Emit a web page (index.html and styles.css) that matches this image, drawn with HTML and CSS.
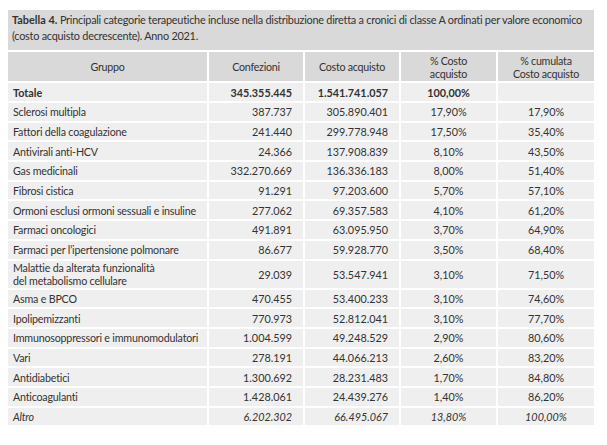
FILE: index.html
```html
<!DOCTYPE html>
<html lang="it">
<head>
<meta charset="utf-8">
<link rel="stylesheet" href="styles.css">
</head>
<body>
<div class="box">
  <p class="caption"><b class="cap-label">Tabella 4.</b> Principali categorie terapeutiche incluse nella distribuzione diretta a cronici di classe A ordinati per valore economico<br>(costo acquisto decrescente). Anno 2021.</p>
  <table class="tbl">
    <colgroup>
      <col class="c1"><col class="c2"><col class="c3"><col class="c4"><col class="c5">
    </colgroup>
    <thead>
      <tr><th>Gruppo</th><th>Confezioni</th><th>Costo acquisto</th><th>% Costo<br>acquisto</th><th>% cumulata<br>Costo acquisto</th></tr>
    </thead>
    <tbody>
      <tr class="tot"><td>Totale</td><td class="num">345.355.445</td><td class="num">1.541.741.057</td><td class="pct">100,00%</td><td class="pct"></td></tr>
      <tr><td>Sclerosi multipla</td><td class="num">387.737</td><td class="num">305.890.401</td><td class="pct">17,90%</td><td class="pct">17,90%</td></tr>
      <tr><td>Fattori della coagulazione</td><td class="num">241.440</td><td class="num">299.778.948</td><td class="pct">17,50%</td><td class="pct">35,40%</td></tr>
      <tr><td>Antivirali anti-HCV</td><td class="num">24.366</td><td class="num">137.908.839</td><td class="pct">8,10%</td><td class="pct">43,50%</td></tr>
      <tr><td>Gas medicinali</td><td class="num">332.270.669</td><td class="num">136.336.183</td><td class="pct">8,00%</td><td class="pct">51,40%</td></tr>
      <tr><td>Fibrosi cistica</td><td class="num">91.291</td><td class="num">97.203.600</td><td class="pct">5,70%</td><td class="pct">57,10%</td></tr>
      <tr><td>Ormoni esclusi ormoni sessuali e insuline</td><td class="num">277.062</td><td class="num">69.357.583</td><td class="pct">4,10%</td><td class="pct">61,20%</td></tr>
      <tr><td>Farmaci oncologici</td><td class="num">491.891</td><td class="num">63.095.950</td><td class="pct">3,70%</td><td class="pct">64,90%</td></tr>
      <tr><td>Farmaci per l’ipertensione polmonare</td><td class="num">86.677</td><td class="num">59.928.770</td><td class="pct">3,50%</td><td class="pct">68,40%</td></tr>
      <tr class="two"><td>Malattie da alterata funzionalità<br>del metabolismo cellulare</td><td class="num">29.039</td><td class="num">53.547.941</td><td class="pct">3,10%</td><td class="pct">71,50%</td></tr>
      <tr><td>Asma e BPCO</td><td class="num">470.455</td><td class="num">53.400.233</td><td class="pct">3,10%</td><td class="pct">74,60%</td></tr>
      <tr><td>Ipolipemizzanti</td><td class="num">770.973</td><td class="num">52.812.041</td><td class="pct">3,10%</td><td class="pct">77,70%</td></tr>
      <tr><td>Immunosoppressori e immunomodulatori</td><td class="num">1.004.599</td><td class="num">49.248.529</td><td class="pct">2,90%</td><td class="pct">80,60%</td></tr>
      <tr><td>Vari</td><td class="num">278.191</td><td class="num">44.066.213</td><td class="pct">2,60%</td><td class="pct">83,20%</td></tr>
      <tr><td>Antidiabetici</td><td class="num">1.300.692</td><td class="num">28.231.483</td><td class="pct">1,70%</td><td class="pct">84,80%</td></tr>
      <tr><td>Anticoagulanti</td><td class="num">1.428.061</td><td class="num">24.439.276</td><td class="pct">1,40%</td><td class="pct">86,20%</td></tr>
      <tr class="alt"><td>Altro</td><td class="num">6.202.302</td><td class="num">66.495.067</td><td class="pct">13,80%</td><td class="pct">100,00%</td></tr>
    </tbody>
  </table>
</div>
</body>
</html>
```
FILE: styles.css
```css
html, body {
  background: #ffffff;
}
body {
  margin: 10px 13px 0 8px;
  font-family: Lato, "Open Sans", sans-serif;
  color: #333333;
}
.box {
  width: 586px;
}
.caption {
  margin: 0;
  background: #d9d9d9;
  height: 40px;
  box-sizing: border-box;
  padding: 2px 0 0 4px;
  font-size: 10.9px;
  letter-spacing: -0.25px;
  line-height: 16px;
  white-space: nowrap;
}
.cap-label {
  font-weight: 700;
  letter-spacing: 0;
}
.tbl {
  width: 586px;
  border-collapse: collapse;
  table-layout: fixed;
  font-size: 10.8px;
}
.c1 { width: 200px; }
.c2 { width: 96px; }
.c3 { width: 96px; }
.c4 { width: 97px; }
.c5 { width: 97px; }
.tbl th, .tbl td {
  border: 2px solid #ffffff;
  padding: 0 4px;
  white-space: nowrap;
}
.tbl tr > :first-child { border-left: none; }
.tbl tr > :last-child { border-right: none; }
.tbl th {
  background: #d9d9d9;
  font-weight: 400;
  font-size: 10.7px;
  letter-spacing: -0.25px;
  height: 29px;
  line-height: 13px;
  text-align: center;
  vertical-align: middle;
}
.tbl td {
  background: #efefef;
  height: 17.7px;
  line-height: 13px;
  vertical-align: middle;
}
.tbl td:first-child {
  font-size: 10.7px;
  letter-spacing: -0.2px;
  padding-left: 5px;
}
.tbl tr.two td {
  height: 27px;
}
.tbl td.num {
  text-align: right;
  padding-right: 11px;
}
.tbl td.pct {
  text-align: center;
}
.tbl tr.tot td {
  font-weight: 700;
  height: 18px;
}
.tbl tr.tot td:first-child {
  letter-spacing: 0;
  font-size: 10.8px;
}
.tbl tr.alt td {
  font-style: italic;
}
```
